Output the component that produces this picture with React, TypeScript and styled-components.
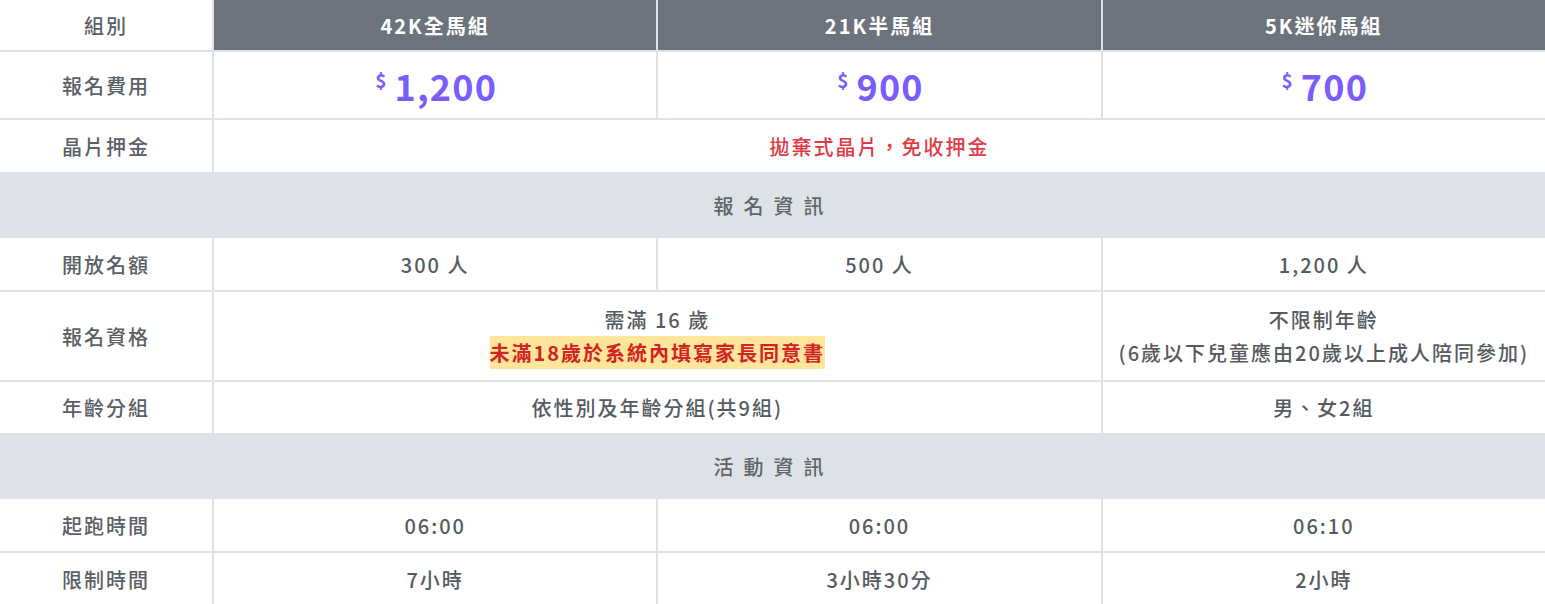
import React from "react";
import styled, { createGlobalStyle } from "styled-components";

const GlobalStyle = createGlobalStyle`
  html, body { margin: 0; padding: 0; background: #ffffff; }
  body {
    font-family: "Noto Sans CJK TC", "Noto Sans", sans-serif;
    -webkit-font-smoothing: antialiased;
  }
`;

const Grid = styled.div`
  display: grid;
  grid-template-columns: 212px repeat(3, 1fr);
  grid-template-rows: 50px 66px 52px 62px 52px 88px 51px 62px 52px 52px;
  gap: 2px;
  background: #dee2e6;
  width: 1545px;
`;

const Cell = styled.div<{ $span?: number; $tone?: "head" | "plain" | "section" }>`
  grid-column: span ${(p) => p.$span ?? 1};
  display: flex;
  flex-direction: column;
  align-items: center;
  justify-content: center;
  text-align: center;
  font-size: 20px;
  letter-spacing: 2px;
  line-height: 33px;
  font-weight: 500;
  color: #555b61;
  background: ${(p) =>
    p.$tone === "head" ? "#6c737c" : p.$tone === "section" ? "#dee2e6" : "#ffffff"};
  ${(p) => p.$tone === "head" && "color: #ffffff; font-weight: 700;"}
  ${(p) => p.$tone === "section" && "color: #60666d; letter-spacing: 10px; padding-left: 2px;"}
`;

const Label = styled(Cell)`
  color: #5a6066;
`;

const Price = styled.div`
  display: flex;
  align-items: flex-start;
  color: #7b5cff;
  font-weight: 700;
  line-height: 1;
  padding-left: 2px;
`;

const Dollar = styled.span`
  font-size: 19px;
  margin-top: 3px;
  margin-right: 8px;
  letter-spacing: 0;
`;

const Amount = styled.span`
  font-size: 36px;
  letter-spacing: 1.2px;
`;

const Warn = styled.span`
  color: #e23a44;
`;

const Highlight = styled.span`
  color: #d42323;
  font-weight: 700;
  background: #ffe69a;
  padding: 2px 0;
  line-height: 32px;
`;

type Row = { label: string; values: React.ReactNode[]; spans?: number[] };

const rowsA: Row[] = [
  { label: "開放名額", values: ["300 人", "500 人", "1,200 人"] },
  {
    label: "報名資格",
    values: [
      <>
        <div>需滿 16 歲</div>
        <div>
          <Highlight>未滿18歲於系統內填寫家長同意書</Highlight>
        </div>
      </>,
      <>
        <div>不限制年齡</div>
        <div>(6歲以下兒童應由20歲以上成人陪同參加)</div>
      </>,
    ],
    spans: [2, 1],
  },
  { label: "年齡分組", values: ["依性別及年齡分組(共9組)", "男、女2組"], spans: [2, 1] },
];

const rowsB: Row[] = [
  { label: "起跑時間", values: ["06:00", "06:00", "06:10"] },
  { label: "限制時間", values: ["7小時", "3小時30分", "2小時"] },
];

const renderRows = (rows: Row[]) =>
  rows.map((r) => (
    <React.Fragment key={r.label}>
      <Label>{r.label}</Label>
      {r.values.map((v, i) => (
        <Cell key={i} $span={r.spans ? r.spans[i] : 1}>
          {v}
        </Cell>
      ))}
    </React.Fragment>
  ));

const prices = ["1,200", "900", "700"];

export default function App() {
  return (
    <>
      <GlobalStyle />
      <Grid>
        <Label>組別</Label>
        <Cell $tone="head">42K全馬組</Cell>
        <Cell $tone="head">21K半馬組</Cell>
        <Cell $tone="head">5K迷你馬組</Cell>

        <Label>報名費用</Label>
        {prices.map((p) => (
          <Cell key={p}>
            <Price>
              <Dollar>$</Dollar>
              <Amount>{p}</Amount>
            </Price>
          </Cell>
        ))}

        <Label>晶片押金</Label>
        <Cell $span={3}>
          <Warn>拋棄式晶片，免收押金</Warn>
        </Cell>

        <Cell $span={4} $tone="section">報名資訊</Cell>
        {renderRows(rowsA)}

        <Cell $span={4} $tone="section">活動資訊</Cell>
        {renderRows(rowsB)}
      </Grid>
    </>
  );
}
